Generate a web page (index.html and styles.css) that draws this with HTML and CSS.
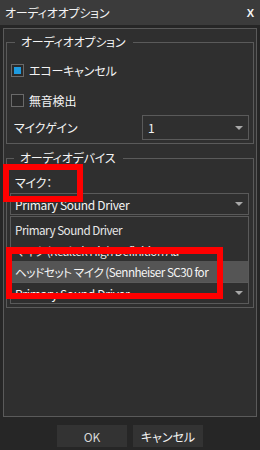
FILE: index.html
```html
<!DOCTYPE html>
<html lang="ja">
<head>
<meta charset="utf-8">
<title>オーディオオプション</title>
<link rel="stylesheet" href="styles.css">
</head>
<body>
<div class="titlebar">
  <span class="title">オーディオオプション</span>
  <span class="close">X</span>
</div>
<div class="panel">
  <fieldset class="group g1">
    <legend>オーディオオプション</legend>
    <div class="row check r1"><span class="box checked"></span><span>エコーキャンセル</span></div>
    <div class="row check r2"><span class="box"></span><span>無音検出</span></div>
    <div class="row gain">
      <span>マイクゲイン</span>
      <div class="select small"><span class="val">1</span><span class="arrow"></span></div>
    </div>
  </fieldset>
  <fieldset class="group g2">
    <legend>オーディオデバイス</legend>
    <div class="label">マイク：</div>
    <div class="combo">
      <div class="select"><span class="val">Primary Sound Driver</span><span class="arrow"></span></div>
      <ul class="dropdown">
        <li>Primary Sound Driver</li>
        <li>マイク (Realtek High Definition Au</li>
        <li class="hl">ヘッドセット マイク (Sennheiser SC30 for</li>
      </ul>
    </div>
    <div class="label spk">スピーカー：</div>
    <div class="select"><span class="val">Primary Sound Driver</span><span class="arrow"></span></div>
  </fieldset>
</div>
<div class="buttons">
  <button class="btn ok">OK</button>
  <button class="btn">キャンセル</button>
</div>
<div class="mark m1"></div>
<div class="mark m2"></div>
</body>
</html>
```
FILE: styles.css
```css
html, body {
  margin: 0;
  padding: 0;
}
body {
  width: 260px;
  height: 450px;
  background: #262626;
  color: #f4f4f4;
  font-family: "Noto Sans CJK JP", "Noto Sans", sans-serif;
  font-size: 12px;
  font-feature-settings: "palt";
  letter-spacing: -0.2px;
  position: relative;
  overflow: hidden;
}
.titlebar {
  height: 25px;
  background: #3b3b3b;
  display: flex;
  align-items: center;
  justify-content: space-between;
  padding: 0 6px 0 5px;
  box-sizing: border-box;
}
.title {
  font-size: 12px;
  line-height: 16px;
}
.close {
  font-family: "Liberation Sans", sans-serif;
  font-weight: bold;
  font-size: 11px;
  letter-spacing: 0;
}
.panel {
  margin: 3px 3px 0 3px;
  height: 389px;
  box-sizing: border-box;
  border: 1px solid #5a5a5a;
  background: #2f2f2f;
  padding: 5px 2px 0 2px;
}
.group {
  margin: 0;
  border: 1px solid #5a5a5a;
  padding: 0 4px 3px 4px;
  min-width: 0;
}
.group legend {
  margin-left: 4px;
  padding: 0 8px 0 6px;
  line-height: 16px;
  height: 16px;
}
.g1 {
  padding-top: 6px;
}
.row {
  display: flex;
  align-items: center;
}
.r1 { height: 28px; }
.r2 { height: 28px; margin-top: 2px; }
.box {
  width: 13px;
  height: 13px;
  box-sizing: border-box;
  border: 1px solid #6a6a6a;
  background: #2a2a2a;
  margin-right: 5px;
  padding: 2px;
}
.box.checked::after {
  content: "";
  display: block;
  width: 7px;
  height: 7px;
  background: #1e9be0;
}
.gain {
  margin-top: 1px;
  justify-content: space-between;
  padding-left: 3px;
}
.select {
  height: 22px;
  box-sizing: border-box;
  border: 1px solid #5a5a5a;
  background: #2f2f2f;
  display: flex;
  align-items: center;
  justify-content: space-between;
  padding: 0 5px 0 4px;
}
.select .val {
  letter-spacing: -0.3px;
}
.select.small {
  width: 107px;
  height: 25px;
  padding-left: 5px;
}
.arrow {
  width: 0;
  height: 0;
  border-left: 4px solid transparent;
  border-right: 4px solid transparent;
  border-top: 4px solid #a8a8a8;
}
.g2 {
  margin-top: 6px;
  padding: 7px 4px 3px 3px;
}
.label {
  line-height: 20px;
  height: 20px;
  padding-left: 5px;
}
.spk {
  margin-top: 45px;
  height: 22px;
}
.combo {
  position: relative;
}
.dropdown {
  position: absolute;
  left: 0;
  right: 0;
  top: calc(100% + 1px);
  margin: 0;
  padding: 2px 0 0 0;
  list-style: none;
  background: #2f2f2f;
  border: 1px solid #5a5a5a;
  height: 67px;
  box-sizing: border-box;
  z-index: 2;
  overflow: hidden;
}
.dropdown li {
  height: 21px;
  line-height: 21px;
  padding-left: 4px;
  white-space: nowrap;
  overflow: hidden;
  color: #e8e8e8;
  font-size: 11.7px;
  letter-spacing: -0.5px;
}
.dropdown li.hl {
  background: #555555;
  color: #f5f5f5;
}
.buttons {
  display: flex;
  justify-content: center;
  gap: 6px;
  margin-top: 8px;
}
.btn {
  width: 70px;
  height: 22px;
  border: none;
  background: #333333;
  color: #f2f2f2;
  font-family: "Noto Sans CJK JP", "Noto Sans", sans-serif;
  font-size: 12px;
  font-feature-settings: "palt";
  padding: 0;
}
.btn.ok {
  color: #d8d8d8;
}
.mark {
  position: absolute;
  border: 6px solid #ff0000;
  box-sizing: border-box;
  z-index: 5;
}
.m1 {
  left: 3px;
  top: 164px;
  width: 80px;
  height: 38px;
}
.m2 {
  left: 6px;
  top: 247px;
  width: 217px;
  height: 52px;
  border-top-width: 7px;
}
```
